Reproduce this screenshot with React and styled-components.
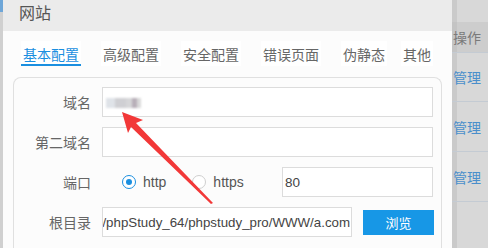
import React from "react";
import styled, { createGlobalStyle } from "styled-components";

const Global = createGlobalStyle`
  html, body { margin: 0; padding: 0; }
  body {
    width: 488px; height: 248px; overflow: hidden;
    background: #d6d6d6;
    font-family: "Liberation Sans", "Noto Sans CJK SC", sans-serif;
  }
`;

const Page = styled.div`
  position: relative;
  display: flex;
  width: 488px;
  height: 248px;
  overflow: hidden;
`;

const LeftEdge = styled.div`
  width: 3px;
  flex: none;
  background: #d0d0d0;
  display: flex;
  flex-direction: column;
`;

const EdgeAccent = styled.div`
  height: 12px;
  background: #6ea6d8;
`;

const Dialog = styled.div`
  width: 449px;
  flex: none;
  background: #fcfcfc;
  display: flex;
  flex-direction: column;
`;

const Header = styled.div`
  height: 31px;
  flex: none;
  box-sizing: border-box;
  background: #ebebeb;
  padding-left: 16px;
  font-family: "Noto Sans CJK SC", sans-serif;
  font-size: 16px;
  line-height: 24px;
  color: #555;
`;

const TabBar = styled.div`
  display: flex;
  margin: 10px 0 0 18px;
`;

const Tab = styled.div`
  padding: 3px 2px 0;
  margin-right: ${(p) => p.$gap ?? 20}px;
  background: #fff;
  font-family: "Noto Sans CJK SC", sans-serif;
  font-size: 14px;
  line-height: 20px;
  color: ${(p) => (p.$active ? "#1a8fe0" : "#666")};
  border-bottom: 2px solid ${(p) => (p.$active ? "#1a8fe0" : "transparent")};
`;

const Panel = styled.div`
  margin: 11px 10px 0;
  flex: 1;
  border: 1px solid #e0e0e0;
  border-bottom: none;
  border-radius: 8px 8px 0 0;
  padding: 9px 8px 0 0;
  display: flex;
  flex-direction: column;
  gap: 10px;
`;

const Row = styled.div`
  display: flex;
  align-items: center;
  height: 30px;
`;

const Label = styled.div`
  width: 77px;
  flex: none;
  margin-right: 11px;
  text-align: right;
  font-family: "Noto Sans CJK SC", sans-serif;
  font-size: 14px;
  color: #666;
`;

const Field = styled.div`
  box-sizing: border-box;
  height: 30px;
  flex: ${(p) => (p.$width ? "none" : "1")};
  width: ${(p) => (p.$width ? `${p.$width}px` : "auto")};
  margin-left: ${(p) => (p.$push ? "auto" : "0")};
  border: 1px solid #dcdcdc;
  background: #fff;
  display: flex;
  align-items: center;
  justify-content: ${(p) => (p.$end ? "flex-end" : "flex-start")};
  padding: ${(p) => (p.$end ? "0 1px 0 0" : "0 0 0 2px")};
  overflow: hidden;
  white-space: nowrap;
  font-size: ${(p) => (p.$end ? "13.3px" : "13.5px")};
  color: #444;
`;

const Blur = styled.div`
  width: 35px;
  height: 10px;
  margin-left: 1px;
  margin-top: 1px;
  filter: blur(1.3px);
  background: linear-gradient(
    90deg,
    #dfe3e8 0 9px,
    #cfcfd3 9px 20px,
    #d6d6d8 20px 26px,
    #b8afb8 26px 31px,
    #dadada 31px 35px
  );
`;

const Radios = styled.div`
  display: flex;
  align-items: center;
  margin-left: 20px;
`;

const RadioItem = styled.div`
  display: flex;
  align-items: center;
  gap: 7px;
  margin-right: ${(p) => (p.$gap ? `${p.$gap}px` : "0")};
  font-size: 14px;
  color: #555;
`;

const Circle = styled.span`
  box-sizing: border-box;
  width: 14px;
  height: 14px;
  border-radius: 50%;
  border: 1px solid ${(p) => (p.$on ? "#1a8fe0" : "#cfcfcf")};
  background: #fff;
  display: flex;
  align-items: center;
  justify-content: center;
  &::after {
    content: "";
    width: 6px;
    height: 6px;
    border-radius: 50%;
    background: ${(p) => (p.$on ? "#1a8fe0" : "transparent")};
  }
`;

const Button = styled.div`
  flex: none;
  width: 71px;
  height: 25px;
  margin-left: 11px;
  margin-right: -1px;
  background: #1797e6;
  color: #fff;
  display: flex;
  align-items: center;
  justify-content: center;
  font-family: "Noto Sans CJK SC", sans-serif;
  font-size: 13px;
`;

const Table = styled.div`
  flex: 1;
  display: flex;
  flex-direction: column;
  background: linear-gradient(90deg, #cacaca 0 5px, #d8d8d8 5px);
  padding-top: 22px;
`;

const HeadCell = styled.div`
  height: 30px;
  background: linear-gradient(90deg, #c4c4c4 0 5px, #cdcdcd 5px);
  font-family: "Noto Sans CJK SC", sans-serif;
  font-size: 14px;
  line-height: 30px;
  color: #7a7a7a;
  padding-left: 1px;
  white-space: nowrap;
`;

const RowsWrap = styled.div`
  display: flex;
  flex-direction: column;
  & > div:first-child {
    box-shadow: inset 0 10px 0 -9px #c4cbd3;
  }
`;

const BodyRow = styled.div`
  box-sizing: border-box;
  height: 50px;
  flex: none;
  border-bottom: 1px solid #c4cbd3;
  display: flex;
  flex-direction: column;
  justify-content: center;
  font-family: "Noto Sans CJK SC", sans-serif;
  font-size: 14px;
  color: #4a8fcb;
  padding-left: 1px;
  white-space: nowrap;
`;

const Arrow = styled.svg`
  position: absolute;
  left: 0;
  top: 0;
  pointer-events: none;
`;

export default function App() {
  return (
    <>
      <Global />
      <Page>
        <LeftEdge>
          <EdgeAccent />
        </LeftEdge>
        <Dialog>
          <Header>网站</Header>
          <TabBar>
            <Tab $active>基本配置</Tab>
            <Tab>高级配置</Tab>
            <Tab>安全配置</Tab>
            <Tab>错误页面</Tab>
            <Tab $gap={14}>伪静态</Tab>
            <Tab $gap={0}>其他</Tab>
          </TabBar>
          <Panel>
            <Row>
              <Label>域名</Label>
              <Field>
                <Blur />
              </Field>
            </Row>
            <Row>
              <Label>第二域名</Label>
              <Field />
            </Row>
            <Row>
              <Label>端口</Label>
              <Radios>
                <RadioItem $gap={26}>
                  <Circle $on />
                  http
                </RadioItem>
                <RadioItem>
                  <Circle />
                  https
                </RadioItem>
              </Radios>
              <Field $width={151} $push>
                80
              </Field>
            </Row>
            <Row>
              <Label>根目录</Label>
              <Field $end>/phpStudy_64/phpstudy_pro/WWW/a.com</Field>
              <Button>浏览</Button>
            </Row>
          </Panel>
        </Dialog>
        <Table>
          <HeadCell>操作</HeadCell>
          <RowsWrap>
            <BodyRow>管理</BodyRow>
            <BodyRow>管理</BodyRow>
            <BodyRow>管理</BodyRow>
          </RowsWrap>
        </Table>
        <Arrow width="488" height="248" viewBox="0 0 488 248">
          <polygon
            points="122,112 143,120 136,123 213,203 211,204 131,127 128,133"
            fill="#f23838"
          />
        </Arrow>
      </Page>
    </>
  );
}
